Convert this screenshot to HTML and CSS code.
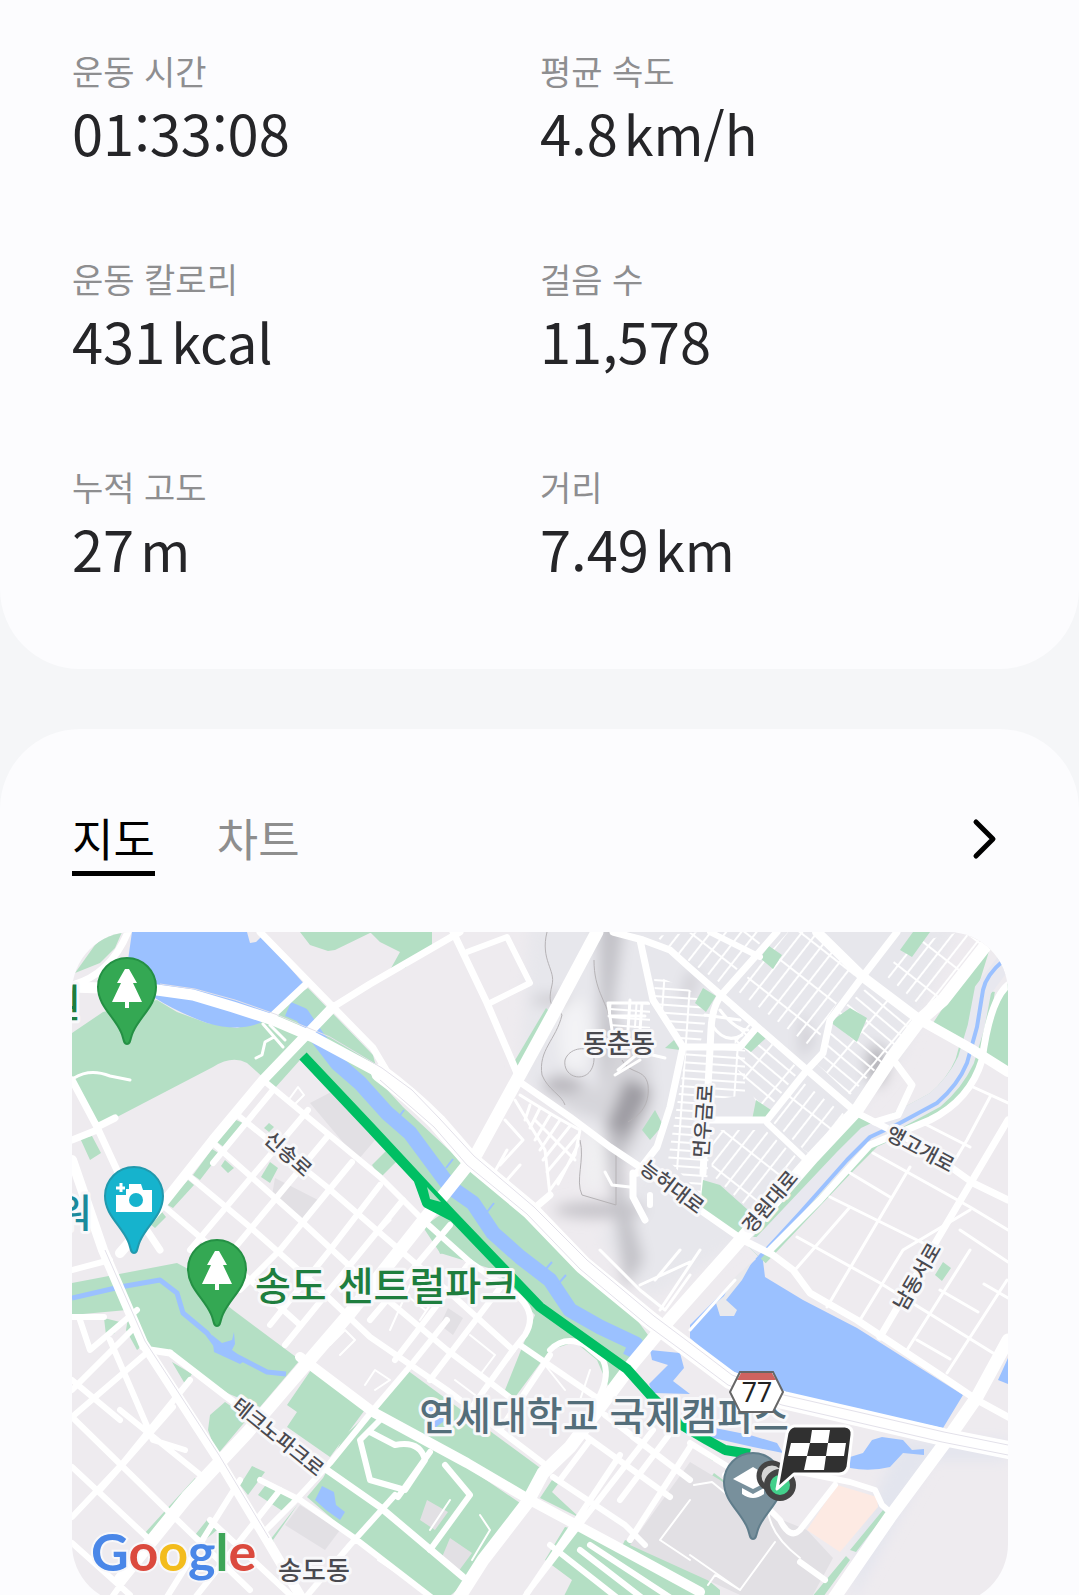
FILE: index.html
```html
<!DOCTYPE html>
<html lang="ko">
<head>
    <meta charset="UTF-8">
    <meta name="viewport" content="width=device-width, initial-scale=1.0">
    <title>운동 기록</title>
    <link rel="stylesheet" href="styles.css">
</head>
<body>
    <main class="page">
        <section class="card card-stats">
            <dl class="stats">
                <div class="stat">
                    <dt>운동 시간</dt>
                    <dd>01:33:08</dd>
                </div>
                <div class="stat">
                    <dt>평균 속도</dt>
                    <dd>4.8<span class="unit">km/h</span></dd>
                </div>
                <div class="stat">
                    <dt>운동 칼로리</dt>
                    <dd>431<span class="unit">kcal</span></dd>
                </div>
                <div class="stat">
                    <dt>걸음 수</dt>
                    <dd>11,578</dd>
                </div>
                <div class="stat">
                    <dt>누적 고도</dt>
                    <dd>27<span class="unit">m</span></dd>
                </div>
                <div class="stat">
                    <dt>거리</dt>
                    <dd>7.49<span class="unit">km</span></dd>
                </div>
            </dl>
        </section>

        <section class="card card-map">
            <div class="tabs">
                <button type="button" class="tab active">지도</button>
                <button type="button" class="tab">차트</button>
                <button type="button" class="more" aria-label="더보기">
                    <svg width="48" height="48" viewBox="0 0 48 48"><path d="M16 7L33 24L16 41"/></svg>
                </button>
            </div>

            <svg class="map" viewBox="72 932 936 672">
                <defs>
                    <filter id="blur" x="-50%" y="-50%" width="200%" height="200%"><feGaussianBlur stdDeviation="7"/></filter>
                    <pattern id="streets" width="30" height="11" patternUnits="userSpaceOnUse" patternTransform="rotate(40)">
                        <path class="thin" d="M0 5H30M3 0V11"/>
                    </pattern>
                    <pattern id="streets2" width="12" height="34" patternUnits="userSpaceOnUse" patternTransform="rotate(38)">
                        <path class="thin" d="M6 0V34M0 4H12"/>
                    </pattern>
                    <pattern id="streets3" width="26" height="8" patternUnits="userSpaceOnUse" patternTransform="rotate(4)">
                        <path class="thin" d="M0 4H26M3 0V8"/>
                    </pattern>
                    <path id="pin" d="M0 57C-4 57 -3 51 -6 45C-13 29 -29 19 -29 0A29 29 0 0 1 29 0C29 19 13 29 6 45C3 51 4 57 0 57Z"/>
                    <path id="tree" d="M-2 -18H2L10 -4H6L15 15H2V21H-2V15H-15L-6 -4H-10Z"/>
                </defs>
                <rect class="land" x="72" y="932" width="936" height="672"/>

                <!-- hills -->
                <g filter="url(#blur)">
                    <path fill="#e7e7ec" d="M530 920H960L900 1060L760 1230L650 1300L600 1240L640 1170L520 1080Z"/>
                    <path fill="#c3c2c8" d="M598 915H626L614 1000L620 1060L600 1085L600 1000Z"/>
                    <path fill="#d6d5da" d="M620 1020L650 1060L652 1110L628 1160L600 1120L570 1110L545 1090L560 1070L600 1090Z"/>
                    <path fill="#9e9ca3" d="M626 1078L652 1090L636 1122L616 1158L606 1128Z"/>
                    <ellipse fill="#b8b6bc" cx="562" cy="1085" rx="20" ry="8"/>
                    <ellipse fill="#cdccd2" cx="555" cy="1000" rx="24" ry="6"/>
                    <ellipse fill="#c4c2c8" cx="600" cy="1210" rx="46" ry="8"/>
                    <path fill="#c3c2c8" d="M605 1130H620L624 1190L644 1260L625 1290L612 1190Z"/>
                    <ellipse fill="#b1b0b5" cx="877" cy="1065" rx="10" ry="20"/>
                    <path fill="#cfced4" d="M700 975L690 1000L680 1000L688 970ZM800 1010L815 1040L800 1060Z"/>
                    <ellipse fill="#f3f3f5" cx="575" cy="1035" rx="16" ry="38"/>
                    <ellipse fill="#f0f0f2" cx="594" cy="1160" rx="12" ry="30"/>
                    <path fill="#e3e5ee" d="M900 1440H1008V1460H930L880 1550L850 1604L860 1530Z"/>
                </g>
                <path class="contour" d="M547 932C540 960 556 970 552 985C546 1010 556 1005 562 1015C556 1040 538 1050 542 1075C548 1090 562 1095 565 1105M594 960C594 990 606 1000 610 1020M565 1060C570 1045 595 1045 594 1060C592 1085 562 1080 565 1060ZM622 1060C630 1075 645 1068 648 1085C650 1105 640 1115 628 1122M580 1140C585 1160 575 1180 582 1195L616 1205V1150"/>

                <!-- dense street blocks -->
                <g>
                    <path fill="url(#streets2)" d="M655 936L700 932H770L723 985L690 962ZM788 932H815L855 975L826 1020L815 1050L736 990Z"/>
                    <path fill="url(#streets)" d="M730 1005L800 1070L764 1115L738 1070ZM870 985L912 1020L880 1065L850 1095L815 1062L835 1015Z"/>
                    <path fill="url(#streets3)" d="M654 975L690 990L708 1010L700 1045H685L655 1000ZM686 1050H745V1095L712 1100L706 1200L668 1160Z"/>
                    <path fill="url(#streets2)" d="M800 1080L845 1115L810 1155L770 1120ZM710 1130H765L800 1160L750 1210L712 1175ZM905 945L960 932L990 945L925 1010L885 975Z"/>
                    <path fill="url(#streets3)" d="M608 1002H650V1028H612Z"/>
                </g>

                <!-- parks -->
                <g class="park">
                    <path d="M75 973L95 945L110 932H122L115 948L100 963Z"/>
                    <path d="M72 1033L103 1012L157 1000L177 1012L207 1023L237 1028L262 1020L285 1002L308 988L373 1055L380 1082L403 1107L463 1163L527 1213L570 1260L637 1320L648 1335L612 1395L597 1360L575 1342L550 1350L513 1400L505 1390L535 1315L495 1270L440 1253L423 1227L440 1215L425 1190L370 1135L300 1060L275 1088L247 1063Q232 1055 213 1067L117 1117L100 1123L93 1118L72 1080Z"/>
                    <path d="M300 932H372L335 950L328 951L310 945ZM370 932H432V945L405 968L390 970L400 952L380 942Z"/>
                    <path d="M546 1008L550 1012L518 1066L514 1062Z"/>
                    <path d="M80 1138L92 1136L101 1153L90 1160ZM236 1120L245 1124L225 1148L217 1142ZM212 1149L220 1154L200 1180L193 1175ZM188 1180L194 1185L173 1208L166 1204ZM162 1212L166 1217L155 1228L150 1224ZM225 1160L234 1168L228 1173L221 1166ZM269 1123L274 1127L269 1132L264 1128ZM372 1165L392 1145L398 1160L380 1178ZM432 1222L450 1213L495 1265L470 1245L440 1254Z"/>
                    <path d="M270 1162L278 1168L270 1183L261 1177Z"/>
                    <path d="M72 1283L177 1263L190 1270L217 1297L233 1310L300 1360L260 1407L227 1393L170 1353L143 1347L127 1310L72 1315Z"/>
                    <path d="M104 1318L120 1322L114 1334L106 1335ZM128 1318L142 1346L137 1350L126 1330ZM172 1362L192 1374L185 1384ZM210 1415L225 1402L248 1418L217 1455L208 1430Z"/>
                    <path d="M313 1367L367 1407L330 1457L287 1427L297 1412L287 1405Z"/>
                    <path d="M377 1410L407 1370L543 1470L525 1497Z"/>
                    <path d="M343 1437L370 1412L467 1467L520 1503L457 1590L440 1604L380 1560L307 1497L323 1478L330 1465Z"/>
                    <path d="M252 1466L265 1472L248 1495L240 1485ZM268 1482L296 1500L284 1512L258 1495ZM195 1478L200 1482L150 1540L143 1535ZM207 1520L217 1530L205 1540L195 1535ZM298 1504L273 1540L280 1562L270 1540Z"/>
                    <path d="M552 1480L558 1484L552 1492L580 1518L540 1498ZM565 1527L600 1535L690 1588V1604H560L572 1580L545 1560ZM625 1540L690 1565L720 1590V1604H690L620 1550Z"/>
                    <path d="M883 1510L886 1513L856 1552L850 1550ZM846 1556L850 1560L818 1604H806ZM714 1473L726 1482L720 1494L706 1484ZM700 1448L715 1457L713 1461L700 1452Z"/>
                    <path d="M990 948L973 1003L967 1043L933 1023L957 987ZM1008 983L997 1000L983 1057L1008 1068ZM857 1115L877 1127L837 1167L767 1237H753L800 1177Z"/>
                    <path d="M769 946L782 955L773 969L760 958ZM703 988L716 996L706 1012L695 1003ZM913 932H930L912 957L900 950ZM850 1008L867 1018L857 1042L830 1022ZM757 1030L766 1038L751 1052L744 1047ZM756 1100L774 1112L764 1120H752ZM703 1180L720 1185L748 1210L740 1235L700 1208ZM642 1130L655 1110L663 1125L650 1140ZM665 1048L674 1040L680 1050ZM943 1262L951 1268L942 1281L935 1275Z"/>
                </g>

                <!-- campus and building blocks -->
                <path fill="#e2e0e4" d="M690 1462L720 1480L770 1515L807 1530L833 1558L808 1604H760L630 1545ZM310 1103L335 1090L375 1140L358 1160ZM275 1178L318 1200L302 1222L272 1195ZM427 1500L448 1512L435 1530L420 1520ZM450 1538L472 1553L458 1572L440 1562ZM300 1505L340 1530L325 1550L285 1525ZM448 1308L463 1318L453 1335L440 1325Z"/>
                <path fill="#fdeae3" d="M837 1485L877 1497L878 1507L840 1552L807 1530Z"/>

                <!-- water -->
                <g class="water">
                    <path d="M132 932H247L250 943L256 942L262 936L305 985L275 1013L260 1023Q238 1032 207 1023Q177 1012 155 998L128 960Z"/>
                    <path d="M762 1253L765 1277L803 1300L857 1328L963 1395L943 1428L857 1410L783 1393L723 1367L690 1338V1325Z"/>
                    <path d="M650 1350L680 1353L684 1368L673 1381L690 1394L653 1393L649 1384L668 1365L652 1360ZM700 1425L750 1435L777 1443L783 1453L753 1447L700 1435Z"/>
                    <path d="M850 1457L863 1453L872 1440L882 1437L903 1440L912 1450L924 1449V1455L903 1453L890 1467Q870 1472 850 1468Z"/>
                    <path d="M212 1335L222 1343L232 1340L234 1332L235 1344L232 1350L246 1360L240 1364L214 1352ZM322 1486L334 1492L336 1505L345 1512L340 1520L326 1510L315 1500ZM1008 1358V1384L998 1380ZM425 1400H440L448 1418L435 1428L422 1415Z"/>
                </g>
                <path fill="#e9e9ec" d="M752 1262L742 1280L726 1300L737 1310L734 1316L720 1316L716 1303L724 1296L732 1280Z"/>
                <path class="river" stroke-width="15" d="M288 1009L302 1015L317 1037L337 1063L360 1083L387 1113L410 1133L430 1160L450 1187L473 1203L493 1233L520 1257L550 1280L570 1310L600 1327L636 1344L630 1357"/>
                <path class="river" stroke-width="5" d="M72 1298L120 1287L160 1280L177 1293L183 1313L207 1333L218 1348L240 1358L267 1372L286 1374"/>
                <path class="river" stroke-width="2" d="M398 1118L404 1110M446 1168L453 1159M487 1212L494 1203M545 1270L552 1262M558 1284L566 1275"/>
                <path class="bank" stroke-width="24" d="M983 990L977 1027L967 1063Q958 1085 937 1103L900 1123L870 1137L847 1160L757 1255"/>
                <path fill="none" stroke="#e8e8ef" stroke-width="17" d="M1006 960L983 990L976 1027L966 1060Q955 1083 935 1100L900 1119L866 1135L843 1158L754 1252"/>
                <path class="river" stroke-width="4" d="M1004 960Q986 975 983 990L977 1027L967 1063Q958 1085 937 1103L900 1123L870 1137L847 1160L800 1213L757 1260"/>

                <!-- small roads -->
                <g class="road" stroke-width="3">
                    <path d="M990 1097L967 1140L955 1160M910 1167L827 1307M850 1207L795 1270M970 1210L903 1250L860 1320M1007 1280L947 1373M970 1250L907 1350M873 1153L970 1207L1008 1230M850 1173L890 1197M830 1197L923 1243M797 1237L880 1283L993 1353M917 1340L950 1359M973 1087L1008 1103M923 1123L970 1147M940 1290L978 1312M960 1230L1008 1262M984 1284L1008 1298"/>
                    <path d="M690 1262L640 1285M700 1250L660 1310M680 1250L655 1280M600 1250L640 1290L665 1310L690 1275M690 1330L735 1280"/>
                    <path d="M520 1095Q560 1120 580 1130L575 1155L550 1190M515 1100L545 1150L550 1195M530 1105L525 1120M540 1108L530 1128M550 1115L535 1140M560 1120L540 1150M570 1126L543 1160M578 1135L547 1172M535 1120L575 1160M578 1145L558 1184"/>
                    <path d="M705 1015L740 1020M712 1025Q725 1045 742 1035M720 1010Q735 1030 748 1030M730 1003L755 1022M608 1003L612 1030M608 1003H648M609 1016H645M630 1000L628 1030M642 1003L640 1030"/>
                    <path d="M285 1040L270 1025M263 1024L283 1047M274 1037L265 1042L262 1055L256 1058M74 1078Q90 1068 110 1076L130 1080"/>
                    <path d="M390 1220L370 1240M505 1120L523 1140L500 1165M490 1180L507 1150M500 1188L520 1165"/>
                    <path d="M640 1060L615 1075M618 1070L640 1052L665 1058M605 1172L612 1185L630 1187"/>
                </g>
                <g class="road" stroke-width="6">
                    <path d="M467 952L507 937L530 983L490 1003M710 932L760 957M767 1123L803 1157M650 1195V1205"/>
                    <path d="M273 1090L213 1163M308 1110L190 1250M327 1137L233 1250M352 1162L280 1250L240 1290M380 1185L330 1250L270 1325M403 1200L350 1265L285 1345"/>
                    <path d="M263 1080L380 1177L423 1220L470 1262L510 1290Q540 1310 525 1335L513 1350M240 1117L327 1187L380 1233L450 1293L513 1350M213 1143L300 1220L370 1285L447 1350L520 1405M190 1177L250 1227L310 1280L370 1337L447 1390L543 1463M160 1203L200 1237L250 1280L300 1325"/>
                    <path d="M450 1225L370 1320M470 1262L395 1360M500 1288L430 1380M513 1350L470 1410M550 1355L500 1430"/>
                    <path d="M550 1350Q565 1335 585 1345L603 1360Q610 1375 600 1395L590 1420M520 1345L600 1400"/>
                    <path d="M587 1437L670 1497M553 1477L625 1525L645 1545M633 1437L677 1470M605 1415L690 1480M690 1447L630 1540M653 1430L583 1520L527 1593M590 1440L560 1480M620 1455L570 1530L520 1604M680 1420L620 1500"/>
                    <path d="M72 1417L170 1513M120 1410L203 1477M72 1467L150 1540M72 1543L130 1595M80 1320L90 1350L137 1310M72 1390L137 1325M110 1340L153 1440L185 1450M72 1417L150 1350M190 1380L123 1463L72 1517M173 1407L100 1490M220 1463L150 1543L110 1600M72 1380L120 1420M72 1270L110 1260M72 1317H104M240 1480L165 1600M280 1490L190 1604M210 1520L300 1604M170 1513L250 1590"/>
                    <path d="M263 1533L293 1503L330 1463L373 1410L407 1370L447 1320M260 1480L300 1500L353 1537L440 1604M370 1432L395 1445Q420 1440 425 1460L405 1490L370 1480L360 1440L380 1420M430 1452L398 1497M445 1465L470 1495L430 1550M395 1495L350 1545L300 1604"/>
                    <path d="M690 1443L730 1468M725 1475L760 1500L780 1520Q790 1540 800 1530L835 1485M800 1472L850 1482L875 1490L882 1505L890 1512"/>
                    <path d="M550 1545L620 1600M580 1550L650 1604M590 1545L680 1604M800 1562L825 1580"/>
                </g>
                <path class="road" stroke-width="2" d="M694 1485L712 1482L740 1505L768 1510Q770 1535 800 1558M775 1542L740 1590L690 1555M740 1590L715 1575L708 1585M690 1500L660 1540L690 1560M378 1560L400 1575M290 1098L298 1087L304 1095L295 1104M450 1500L430 1530M480 1515L490 1530L472 1560M330 1345L345 1330L355 1340L340 1355M365 1385L375 1370L390 1380L375 1390M400 1290L425 1310M410 1285L390 1330M440 1290L420 1320M455 1380L475 1395M470 1335L495 1355L480 1375M545 1365L565 1390M590 1370L580 1400"/>

                <!-- main roads -->
                <g class="road" stroke-width="7">
                    <path d="M260 932L333 1007L373 1048L395 1085M333 1007L370 984L460 932M453 932L487 1003L520 1080M517 1080L570 1117L610 1147L640 1167L700 1210L743 1240L773 1255L793 1270L810 1293L857 1320L937 1373L977 1400L1008 1417"/>
                    <path d="M613 932L643 940L670 950L690 968L723 997L807 1070L857 1113L920 1145L973 1183L1008 1200M777 932L723 993Q712 1005 711 1030L708 1087L703 1173M640 940L653 1000L683 1047L670 1107L657 1147L637 1173M633 1173V1197L645 1220M683 1047H740L757 1027M897 932L860 980L830 1020L823 1053L807 1070L767 1120H707"/>
                    <path d="M1008 1120L937 1240L880 1337M1008 985Q990 1000 982 1060Q970 1100 930 1120L870 1145L820 1200L770 1250M895 1062L912 1085L898 1115L875 1122"/>
                    <path d="M170 1353L227 1397L327 1470L380 1507L463 1577M143 1347L150 1350L170 1353M72 1080L97 1127L140 1220L160 1250M97 1130L72 1140M97 1127L115 1118M72 985Q110 975 128 932M305 985L272 1016M550 1195L530 1212"/>
                </g>
                <g class="road" stroke-width="10">
                    <path d="M333 1007L263 1080L213 1140L160 1207L120 1253"/>
                    <path d="M817 932L863 977L920 1020L970 1048L1008 1072"/>
                    <path d="M300 1357L373 1412L467 1463L530 1500L623 1550L700 1592"/>
                    <path d="M72 1160L103 1250L143 1343L217 1457L267 1540L305 1604"/>
                </g>
                <g class="road" stroke-width="13">
                    <path d="M597 932L557 1007L517 1080L477 1153L450 1187L350 1313L247 1433L187 1497L120 1580"/>
                    <path d="M990 940L943 1000L920 1020L890 1060L857 1110L813 1157L743 1237L663 1327L633 1363L570 1447L543 1473L527 1503L483 1560L455 1604"/>
                    <path d="M1008 1340L977 1397L947 1440L890 1517L830 1604"/>
                </g>
                <path class="road" stroke-width="18" d="M380 1073Q410 1095 437 1122L470 1160L530 1210L583 1265L650 1320L690 1350L730 1380L783 1400L857 1417L943 1437L1008 1450"/>
                <path class="road" stroke-width="11" d="M72 987L157 990L193 995L233 1007L273 1020L313 1037L380 1073"/>
                <path class="lane" d="M160 984L195 989L235 1000L275 1014L330 1037L382 1068L412 1090L440 1119L474 1156L534 1207L587 1260L654 1316L694 1346L732 1375L784 1395L858 1412L944 1432L1008 1445M380 1080L434 1127L467 1165L527 1214L580 1269L647 1325L688 1355L728 1385L782 1405L856 1422L942 1442L1008 1455M105 1250L145 1341L219 1455L269 1538"/>

                <!-- exercise route -->
                <path class="route" d="M303 1056L370 1127L452 1215L497 1262L540 1307L627 1369L652 1397L680 1424L707 1440L725 1450L750 1454M418 1178L427 1203L454 1217"/>
                <path class="park" d="M427 1187L441 1202L430 1199Z"/>

                <g class="label road-name">
                    <text transform="translate(289 1153) rotate(42)">신송로</text>
                    <text transform="translate(702 1121) rotate(-86)">먼우금로</text>
                    <text transform="translate(673 1186) rotate(37)">능허대로</text>
                    <text transform="translate(769 1201) rotate(-50)">경원대로</text>
                    <text transform="translate(921 1148) rotate(28)">앵고개로</text>
                    <text transform="translate(916 1276) rotate(-60)">남동서로</text>
                    <text transform="translate(279 1436) rotate(39)">테크노파크로</text>
                </g>
                <g class="label area-name">
                    <text x="619" y="1041">동춘동</text>
                    <text x="314" y="1568">송도동</text>
                </g>
                <g class="label place-name">
                    <text class="green" x="386" y="1283">송도 센트럴파크</text>
                    <text class="slate" x="604" y="1413">연세대학교 국제캠퍼스</text>
                    <text class="green" x="63" y="1000">원</text>
                    <text class="teal" x="74" y="1210">워</text>
                </g>

                <g transform="translate(127 987)">
                    <use href="#pin" fill="#34a853" stroke="#249044" stroke-width="2"/>
                    <use href="#tree" fill="#fff"/>
                </g>
                <g transform="translate(217 1269)">
                    <use href="#pin" fill="#34a853" stroke="#249044" stroke-width="2"/>
                    <use href="#tree" fill="#fff"/>
                </g>
                <g transform="translate(134 1196)">
                    <use href="#pin" fill="#16b3cd" stroke="#2199ad" stroke-width="2"/>
                    <path fill="#fff" d="M-5 -7V-12H7L9 -6H18V16H-18V-1H-8V-7Z"/>
                    <path stroke="#fff" stroke-width="3" d="M-18 -8H-9M-13 -13V-4"/>
                    <circle fill="#16b3cd" cx="2" cy="4" r="7"/>
                </g>
                <g transform="translate(753 1482)">
                    <use href="#pin" fill="#78909c" stroke="#607d8b" stroke-width="2"/>
                    <path fill="#fff" d="M-20 -3L0 -15L20 -3L0 7ZM-11 6L0 12L11 6V12Q0 20 -11 12Z"/>
                </g>

                <!-- route 77 shield -->
                <path fill="#fff" d="M740 1372H773L783 1392L773 1412H740L730 1392Z"/>
                <path fill="#cf6360" d="M741 1373H772L776 1380H737Z"/>
                <path fill="none" stroke="#666" stroke-width="2" d="M740 1372H773L783 1392L773 1412H740L730 1392Z"/>
                <text class="shield" x="757" y="1393">77</text>

                <!-- start and finish markers -->
                <circle cx="772" cy="1476" r="13" fill="#d5d5d5" stroke="#444" stroke-width="5"/>
                <circle cx="780" cy="1485" r="13" fill="#43d08b" stroke="#444" stroke-width="6"/>
                <path fill="#303030" stroke="#fff" stroke-width="3" stroke-linejoin="round" d="M794 1426H845Q853 1427 852 1435L848 1467Q846 1474 839 1474H794L777 1489L787 1433Q789 1427 794 1426Z"/>
                <path fill="#fff" d="M812 1430H830L828 1443H846L844 1456H826L824 1470H804L807 1456H788L791 1443H810Z"/>
                <path fill="#303030" d="M810 1443H828L826 1456H807Z"/>

                <text class="logo" x="91" y="1571"><tspan class="blue">G</tspan><tspan class="red">o</tspan><tspan class="yellow">o</tspan><tspan class="blue">g</tspan><tspan class="leaf">l</tspan><tspan class="red">e</tspan></text>
            </svg>
        </section>
    </main>
</body>
</html>
```

FILE: styles.css
```css
* {
    box-sizing: border-box;
}
body {
    margin: 0;
    height: 100vh;
    overflow: hidden;
    font-family: "Noto Sans CJK KR", "Noto Sans", sans-serif;
    background-color: #f5f6f8;
}
.page {
    display: flex;
    flex-direction: column;
    gap: 60px;
    height: 100%;
    overflow: hidden;
}
.card {
    flex-shrink: 0;
    background: #fcfcfe;
    padding: 0 71px 0 72px;
}

/* stats */
.card-stats {
    padding-top: 51px;
    padding-bottom: 83px;
    border-radius: 0 0 80px 80px;
}
.stats {
    display: grid;
    grid-template-columns: 1fr 1fr;
    row-gap: 89px;
    margin: 0;
}
.stat dt {
    font-size: 34px;
    line-height: 40px;
    color: #8e8e90;
}
.stat dd {
    margin: 3px 0 0;
    font-size: 56px;
    line-height: 76px;
    color: #252528;
}
.unit {
    margin-left: 6px;
    font-size: 54px;
    line-height: 1;
}

/* map card */
.card-map {
    padding-top: 80px;
    padding-bottom: 72px;
    border-radius: 80px 80px 0 0;
}
.tabs {
    display: flex;
    align-items: flex-start;
    gap: 62px;
    margin-bottom: 56px;
}
.tab {
    padding: 0 0 4px;
    border: none;
    border-bottom: 5px solid transparent;
    background: none;
    font-family: inherit;
    font-size: 45px;
    line-height: 58px;
    color: #8e8e8e;
    cursor: pointer;
}
.tab.active {
    color: #000;
    border-bottom-color: #000;
}
.more {
    display: flex;
    margin-left: auto;
    padding: 6px 0;
    border: none;
    background: none;
    cursor: pointer;
}
.more path {
    fill: none;
    stroke: #000;
    stroke-width: 5;
    stroke-linecap: round;
    stroke-linejoin: round;
}
.map {
    display: block;
    width: 100%;
    height: auto;
    border-radius: 60px;
}

/* map drawing */
.land {
    fill: #eeebef;
}
.park {
    fill: #b4dfc4;
}
.water {
    fill: #9bc1ff;
}
.river {
    fill: none;
    stroke: #9bc1ff;
    stroke-linejoin: round;
}
.bank {
    fill: none;
    stroke: #b4dfc4;
}
.thin {
    fill: none;
    stroke: #fff;
    stroke-width: 2;
}
.contour {
    fill: none;
    stroke: #b5b2b5;
    stroke-width: 1;
}
.road {
    fill: none;
    stroke: #fff;
    stroke-linecap: round;
    stroke-linejoin: round;
}
.lane {
    fill: none;
    stroke: #e3e1ea;
    stroke-width: 1;
}
.route {
    fill: none;
    stroke: #00bf63;
    stroke-width: 10;
    stroke-linejoin: round;
}
.label {
    font-weight: 500;
    text-anchor: middle;
    dominant-baseline: central;
    paint-order: stroke;
    stroke: #f8f8fa;
    stroke-width: 6;
    stroke-linejoin: round;
    fill: #4a4a50;
}
.road-name {
    font-size: 20px;
}
.area-name {
    font-size: 26px;
}
.place-name {
    font-size: 39px;
}
.green {
    fill: #1e7e3e;
}
.slate {
    fill: #546e7a;
}
.teal {
    fill: #1a8a9c;
}
.shield {
    font-family: Roboto, sans-serif;
    font-size: 27px;
    text-anchor: middle;
    dominant-baseline: central;
    fill: #222;
}
.logo {
    font-family: Lato, sans-serif;
    font-size: 52px;
    font-weight: 700;
    paint-order: stroke;
    stroke: #f8f8fa;
    stroke-width: 4;
}
.blue {
    fill: #4a87e8;
}
.red {
    fill: #db4a3e;
}
.yellow {
    fill: #f3bc1c;
}
.leaf {
    fill: #3ea558;
}
```
